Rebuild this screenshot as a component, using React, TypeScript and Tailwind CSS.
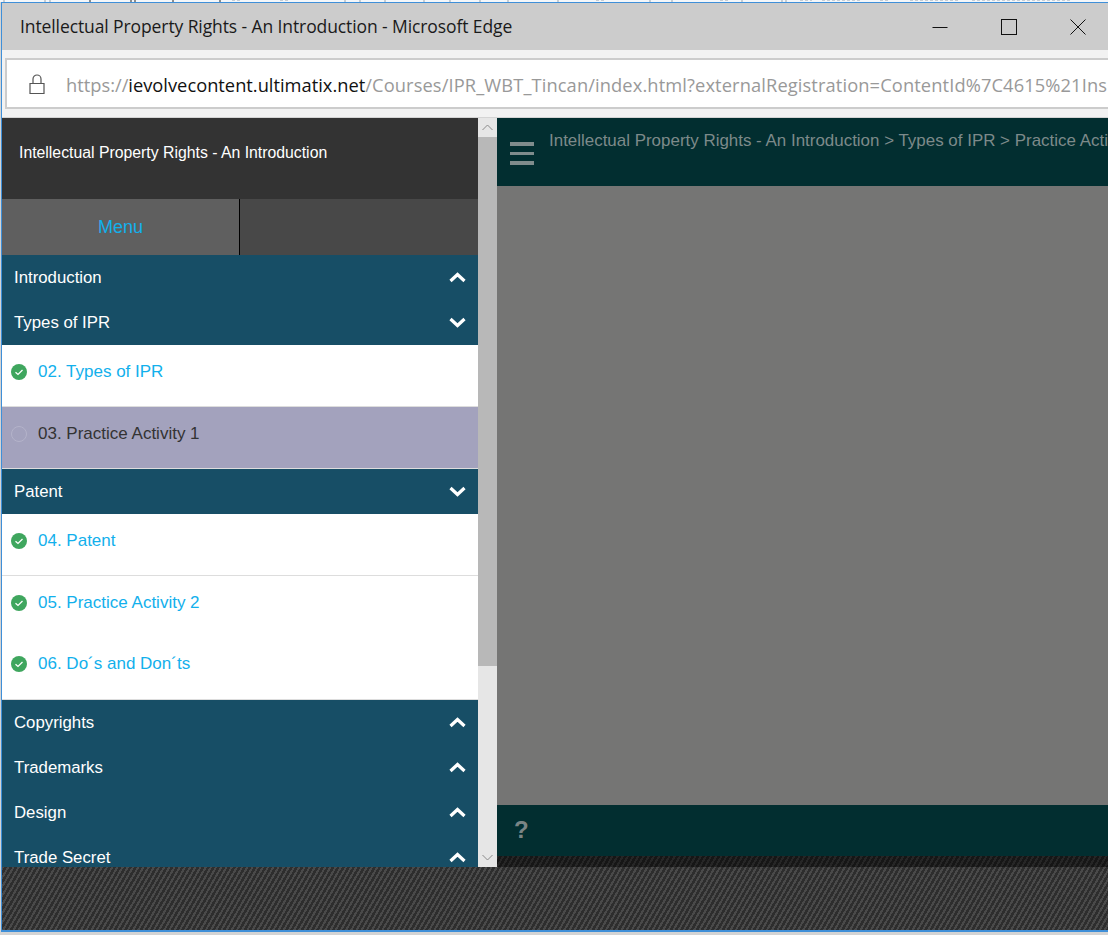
import React from "react";

const font = "font-['Liberation_Sans',Arial,sans-serif]";

function Chevron({ up }: { up: boolean }) {
  return (
    <svg width="17" height="11" viewBox="0 0 17 11" className="mr-[12px] shrink-0">
      <path
        d={up ? "M1.5 9 L8.5 2.5 L15.5 9" : "M1.5 2 L8.5 8.5 L15.5 2"}
        fill="none"
        stroke="#fff"
        strokeWidth="3.2"
      />
    </svg>
  );
}

function Section({ label, up = true }: { label: string; up?: boolean }) {
  return (
    <div className="h-[45px] shrink-0 flex items-center justify-between bg-[#174e66] pl-3 text-white text-[16.8px]">
      <span>{label}</span>
      <Chevron up={up} />
    </div>
  );
}

function Done() {
  return (
    <svg width="16" height="16" viewBox="0 0 16 16" className="shrink-0">
      <circle cx="8" cy="8" r="8" fill="#3fa65e" />
      <path d="M4.5 8.2 L7 10.4 L11.5 6" fill="none" stroke="#fff" strokeWidth="1.3" />
    </svg>
  );
}

function Item({
  label,
  active = false,
  border = true,
  height = "h-[62px]",
}: {
  label: string;
  active?: boolean;
  border?: boolean;
  height?: string;
}) {
  return (
    <div
      className={`${height} shrink-0 flex items-start pt-[17px] pl-[9px] gap-[11px] text-[17px] leading-[20px] ${
        active ? "bg-[#a3a2bd] text-[#333333]" : "bg-white text-[#12b0ec]"
      } ${border ? "border-b border-[#dddddd]" : ""}`}
    >
      <span className="mt-[2px] flex">
        {active ? (
          <span className="w-4 h-4 rounded-full border border-[#b4b3ca]" />
        ) : (
          <Done />
        )}
      </span>
      <span>{label}</span>
    </div>
  );
}

function Stripes() {
  return (
    <div className="flex-1 bg-[repeating-linear-gradient(120deg,#4a4a4a_0px,#4a4a4a_2px,#2e2e2e_2px,#2e2e2e_4.5px)]" />
  );
}

export default function App() {
  return (
    <div className={`w-[1108px] h-[935px] overflow-hidden bg-[#d4d4d4] flex flex-col ${font}`}>
      {/* sliver of the window behind */}
      <div className="h-[2px] shrink-0 bg-[#f4f7fa] flex">
        <svg width="1108" height="2" viewBox="0 0 1108 2">
          <path
            d="M90 0V2M131 0V2M135 0V2M173 0V2M220 0V2"
            stroke="#222222"
            strokeWidth="1"
          />
          <path
            d="M4 0V2M45 0V2M50 0V2M232 0H240M280 0H288M345 0V2M360 0V2M385 0V2M424 0V2M450 0V2M480 0V2M508 0V2M558 0V2M596 0H604M650 0V2M672 0V2M720 0H730M742 0V2M782 0V2M786 0V2M800 0H812M822 0H860M880 0H890M910 0H960M972 0H1072"
            stroke="#9aa3ab"
            strokeWidth="1"
            strokeDasharray="3 2"
          />
        </svg>
      </div>
      <div className="h-[930px] shrink-0 flex flex-col border-t border-l border-b-2 border-[#3f8fd8] ml-px overflow-hidden">
        {/* title bar */}
        <div className="h-[47px] shrink-0 bg-[#cccccc] flex items-center justify-between pl-[18px] pr-[22px]">
          <span className="font-['Open_Sans',sans-serif] text-[17.5px] text-[#1a1a1a] tracking-[-0.1px] whitespace-nowrap">
            Intellectual Property Rights - An Introduction - Microsoft Edge
          </span>
          <div className="flex items-center gap-[53px]">
            <svg width="16" height="16" viewBox="0 0 16 16">
              <path d="M0.5 8.5 H15.5" stroke="#111" strokeWidth="1" />
            </svg>
            <svg width="16" height="16" viewBox="0 0 16 16">
              <rect x="0.5" y="0.5" width="15" height="15" fill="none" stroke="#111" />
            </svg>
            <svg width="16" height="16" viewBox="0 0 16 16">
              <path d="M0.5 0.5 L15.5 15.5 M15.5 0.5 L0.5 15.5" stroke="#111" />
            </svg>
          </div>
        </div>
        {/* address bar */}
        <div className="h-[68px] shrink-0 bg-[#f2f2f2] pt-[8px] pl-[3px] border-b border-[#d4d4d4]">
          <div className="h-[51px] bg-white border-y-2 border-l-2 border-[#cccccc] flex items-center pl-[22px] overflow-hidden whitespace-nowrap font-['Open_Sans',sans-serif] text-[18.3px] text-[#999999]">
            <svg width="16" height="20" viewBox="0 0 16 20" className="shrink-0 mr-[21px]">
              <path
                d="M1 9.5 H15 V19.5 H1 Z M4 9.5 V5 A4 4 0 0 1 12 5 V9.5"
                fill="none"
                stroke="#555555"
                strokeWidth="1.2"
              />
            </svg>
            <span className="mt-[2px]">
              https://<span className="text-[#111111]">ievolvecontent.ultimatix.net</span>
              <span className="tracking-[0.11px]">
                /Courses/IPR_WBT_Tincan/index.html?externalRegistration=ContentId%7C4615%21Ins
              </span>
            </span>
          </div>
        </div>
        {/* content */}
        <div className="h-[749px] shrink-0 flex bg-[#d0d0d0]">
          <div className="w-[476px] shrink-0 flex flex-col overflow-hidden">
            <div className="h-[81px] shrink-0 bg-[#333333] text-white text-[15.8px] pl-[17px] pt-[25px] leading-[20px]">
              Intellectual Property Rights - An Introduction
            </div>
            <div className="h-[56px] shrink-0 flex">
              <div className="w-[238px] bg-[#5f5f5f] border-r border-black flex items-center justify-center pt-[1px] text-[#12b0ec] text-[18px]">
                Menu
              </div>
              <div className="flex-1 bg-[#484848]" />
            </div>
            <Section label="Introduction" />
            <Section label="Types of IPR" up={false} />
            <Item label="02. Types of IPR" />
            <Item label="03. Practice Activity 1" active />
            <Section label="Patent" up={false} />
            <Item label="04. Patent" />
            <Item label="05. Practice Activity 2" border={false} height="h-[61px]" />
            <Item label="06. Do´s and Don´ts" height="h-[63px]" />
            <Section label="Copyrights" />
            <Section label="Trademarks" />
            <Section label="Design" />
            <Section label="Trade Secret" />
          </div>
          {/* scrollbar */}
          <div className="w-[19px] shrink-0 flex flex-col bg-[#e6e6e6]">
            <div className="h-[19px] shrink-0 flex items-center justify-center">
              <svg width="11" height="7" viewBox="0 0 11 7">
                <path d="M0.5 6 L5.5 1 L10.5 6" fill="none" stroke="#8a8a8a" />
              </svg>
            </div>
            <div className="h-[529px] shrink-0 bg-[#b8b8b8]" />
            <div className="flex-1" />
            <div className="h-[19px] shrink-0 flex items-center justify-center">
              <svg width="11" height="7" viewBox="0 0 11 7">
                <path d="M0.5 1 L5.5 6 L10.5 1" fill="none" stroke="#8a8a8a" />
              </svg>
            </div>
          </div>
          {/* course pane */}
          <div className="flex-1 min-w-0 flex flex-col overflow-hidden">
            <div className="h-[68px] shrink-0 bg-[#022e30] flex items-start pl-[13px] whitespace-nowrap text-[#7d8a8a] text-[16.95px]">
              <div className="mt-[24px] w-[24px] flex flex-col gap-[6px] shrink-0">
                <span className="h-[3.5px] bg-[#7f8c8c]" />
                <span className="h-[3.5px] bg-[#7f8c8c]" />
                <span className="h-[3.5px] bg-[#7f8c8c]" />
              </div>
              <span className="ml-[15px] mt-[10px]">
                Intellectual Property Rights - An Introduction &gt; Types of IPR &gt; Practice Activity 1
              </span>
            </div>
            <div className="h-[619px] shrink-0 bg-[#757574]" />
            <div className="h-[51px] shrink-0 bg-[#022e30] flex items-center pl-[17px] pb-[2px] text-[24px] font-bold text-[#7a8585]">
              ?
            </div>
            <div className="flex-1 flex flex-col bg-[#1c1c1c] bg-[repeating-linear-gradient(120deg,#262626_0px,#262626_2px,#161616_2px,#161616_4.5px)]" />
          </div>
        </div>
        {/* page texture below the popup content */}
        <Stripes />
      </div>
    </div>
  );
}
